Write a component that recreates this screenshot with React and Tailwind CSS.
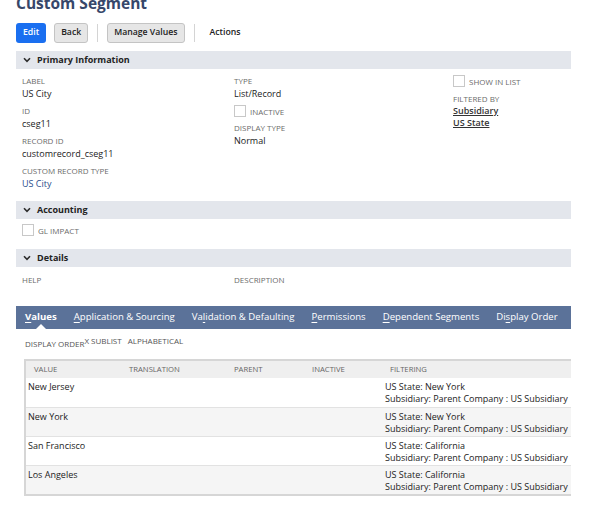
import React from 'react';

const Label = ({ children }) => (
  <div className="text-[8px] leading-[12px] uppercase text-[#6b6b6b]">{children}</div>
);

const Value = ({ children, link }) => (
  <div className={`text-[9px] leading-[14px] ${link ? 'text-[#2b4e8c]' : 'text-[#222]'}`}>{children}</div>
);

const Check = ({ label }) => (
  <div className="flex items-end gap-[4px] h-[12px]">
    <span className="inline-block w-[12px] h-[12px] border border-[#c8c8c8] bg-white" />
    <span className="text-[8px] leading-[10px] uppercase text-[#6b6b6b]">{label}</span>
  </div>
);

const Chevron = () => (
  <svg width="8" height="6" viewBox="0 0 8 6" className="mr-[6px]">
    <path d="M1 1.3 L4 4.4 L7 1.3" fill="none" stroke="#2d2d2d" strokeWidth="1.6" />
  </svg>
);

const SectionHeader = ({ title }) => (
  <div className="flex items-center h-[18px] bg-[#e3e6ec] pl-[7px] text-[9px] font-bold text-[#222]">
    <Chevron />
    {title}
  </div>
);

const Sep = () => <span className="w-px h-[18px] bg-[#d4d4d4] mx-[9px]" />;

const tabs = [
  ['', 'V', 'alues'],
  ['', 'A', 'pplication & Sourcing'],
  ['Va', 'l', 'idation & Defaulting'],
  ['', 'P', 'ermissions'],
  ['', 'D', 'ependent Segments'],
  ['Di', 's', 'play Order'],
];

const rows = [
  ['New Jersey', 'US State: New York', 'bg-white'],
  ['New York', 'US State: New York', 'bg-[#f5f5f5]'],
  ['San Francisco', 'US State: California', 'bg-white'],
  ['Los Angeles', 'US State: California', 'bg-[#f5f5f5]'],
];

export default function App() {
  return (
    <div
      className="w-[589px] h-[511px] overflow-hidden bg-white pl-[16px] pr-[18px]"
      style={{ fontFamily: '"Open Sans", "Liberation Sans", sans-serif' }}
    >
      <h1 className="text-[15.5px] leading-[20px] font-bold text-[#36476a] -mt-[7px]">Custom Segment</h1>

      {/* toolbar */}
      <div className="flex items-center mt-[10px] h-[20px]">
        <button className="h-[20px] px-[7px] rounded-[3px] bg-[#1a6ff0] text-white text-[8.7px] font-semibold">Edit</button>
        <button className="ml-[8px] h-[20px] px-[6px] rounded-[3px] bg-[#e6e6e6] border border-[#c4c4c4] text-[#222] text-[8.7px] font-semibold">Back</button>
        <Sep />
        <button className="h-[20px] px-[6px] rounded-[3px] bg-[#e6e6e6] border border-[#c4c4c4] text-[#222] text-[8.7px] font-semibold">Manage Values</button>
        <Sep />
        <span className="ml-[6px] text-[8.7px] font-semibold text-[#222]">Actions</span>
      </div>

      <div className="mt-[8px]">
        <SectionHeader title="Primary Information" />
        <div className="grid grid-cols-[212px_219px_1fr] pl-[6px] pt-[6px] pb-[10px]">
          <div className="flex flex-col gap-[4px]">
            <div><Label>Label</Label><Value>US City</Value></div>
            <div><Label>ID</Label><Value>cseg11</Value></div>
            <div><Label>Record ID</Label><Value>customrecord_cseg11</Value></div>
            <div><Label>Custom Record Type</Label><Value link>US City</Value></div>
          </div>
          <div className="flex flex-col">
            <div><Label>Type</Label><Value>List/Record</Value></div>
            <div className="mt-[4px]"><Check label="Inactive" /></div>
            <div className="mt-[5px]"><Label>Display Type</Label><Value>Normal</Value></div>
          </div>
          <div className="flex flex-col">
            <Check label="Show in list" />
            <div className="mt-[6px]">
              <Label>Filtered by</Label>
              <div className="text-[9px] leading-[12px] font-semibold text-[#333]">
                <div><span className="underline underline-offset-[1px]">Subsidiary</span></div>
                <div><span className="underline underline-offset-[1px]">US State</span></div>
              </div>
            </div>
          </div>
        </div>

        <SectionHeader title="Accounting" />
        <div className="pl-[6px] pt-[5px] pb-[13px]">
          <Check label="GL Impact" />
        </div>

        <SectionHeader title="Details" />
        <div className="grid grid-cols-[212px_1fr] pl-[6px] pt-[7px] h-[39px]">
          <Label>Help</Label>
          <Label>Description</Label>
        </div>
      </div>

      {/* tabs */}
      <div className="relative flex items-center h-[23px] bg-[#5b7299] pl-[9px] gap-[17px] text-[9.6px] text-white whitespace-nowrap">
        {tabs.map(([a, u, b], i) => (
          <span key={i} className={i === 0 ? 'font-bold relative' : ''}>
            {a}<span className="underline underline-offset-[2px]">{u}</span>{b}
            {i === 0 && (
              <span className="absolute left-1/2 -translate-x-1/2 top-[14px] w-0 h-0 border-l-[5px] border-r-[5px] border-b-[5px] border-l-transparent border-r-transparent border-b-white" />
            )}
          </span>
        ))}
      </div>

      <div className="flex items-start pl-[9px] pt-[6px] text-[8px] uppercase text-[#555] leading-[12px]">
        <span className="mt-[3px]">Display Order</span>
        <span>X Sublist</span>
        <span className="ml-[6px]">Alphabetical</span>
      </div>

      {/* table */}
      <div className="ml-[8px] mt-[9px] border-t-2 border-l-2 border-b-2 border-[#d6d6d6]">
        <div className="grid grid-cols-[95px_105px_78px_78px_1fr] h-[17px] items-center bg-[#efefef] text-[7.7px] uppercase text-[#666] pl-[8px]">
          <span>Value</span>
          <span>Translation</span>
          <span>Parent</span>
          <span>Inactive</span>
          <span>Filtering</span>
        </div>
        {rows.map(([name, state, bg], i) => (
          <div
            key={i}
            className={`grid grid-cols-[357px_1fr] h-[29px] pl-[2px] pt-[3px] text-[9px] leading-[12px] text-[#222] ${bg} ${i > 0 ? 'border-t border-[#e2e2e2]' : ''}`}
          >
            <span>{name}</span>
            <div className="whitespace-nowrap">
              <div>{state}</div>
              <div>Subsidiary: Parent Company : US Subsidiary</div>
            </div>
          </div>
        ))}
      </div>
    </div>
  );
}
